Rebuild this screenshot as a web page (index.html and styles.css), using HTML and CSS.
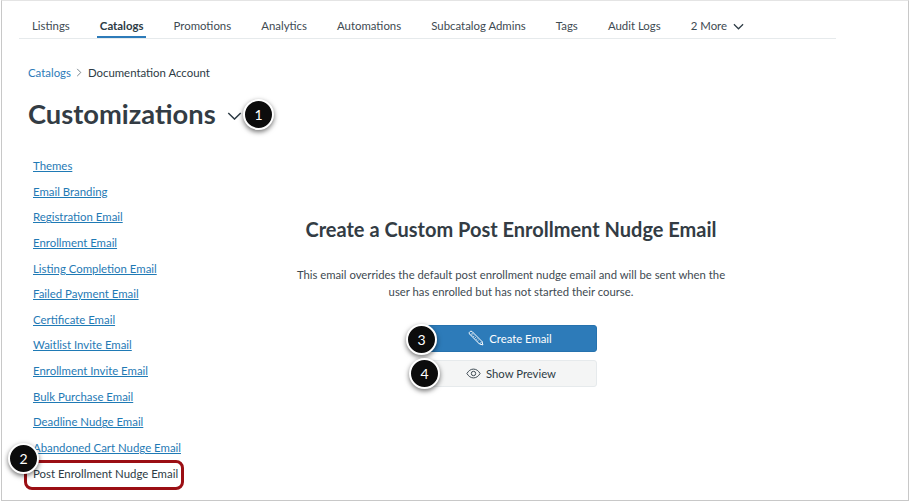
FILE: index.html
```html
<!DOCTYPE html>
<html lang="en">
<head>
    <meta charset="UTF-8">
    <meta name="viewport" content="width=device-width, initial-scale=1.0">
    <title>Customizations</title>
    <link rel="stylesheet" href="styles.css">
</head>
<body>
    <div class="window">
        <!-- Tabs -->
        <nav class="tabs">
            <a class="tab">Listings</a>
            <a class="tab tab-active">Catalogs</a>
            <a class="tab">Promotions</a>
            <a class="tab">Analytics</a>
            <a class="tab">Automations</a>
            <a class="tab">Subcatalog Admins</a>
            <a class="tab">Tags</a>
            <a class="tab">Audit Logs</a>
            <a class="tab">2 More
                <svg class="tab-chevron" viewBox="0 0 12 7" width="11" height="7"><path d="M1 1l5 5 5-5" fill="none" stroke="#2d3b45" stroke-width="1.3"/></svg>
            </a>
        </nav>

        <!-- Breadcrumb -->
        <div class="breadcrumb">
            <a class="crumb-link">Catalogs</a>
            <svg class="crumb-sep" viewBox="0 0 6 10" width="6" height="9"><path d="M1 1l4 4-4 4" fill="none" stroke="#6b7780" stroke-width="1"/></svg>
            <span>Documentation Account</span>
        </div>

        <div class="title-row">
            <h1>Customizations</h1>
            <svg class="title-chevron" viewBox="0 0 16 9" width="15" height="8"><path d="M1 1l7 7 7-7" fill="none" stroke="#2d3b45" stroke-width="1.6"/></svg>
        </div>

        <div class="content">
            <!-- Side menu -->
            <ul class="side-menu">
                <li><a>Themes</a></li>
                <li><a>Email Branding</a></li>
                <li><a>Registration Email</a></li>
                <li><a>Enrollment Email</a></li>
                <li><a>Listing Completion Email</a></li>
                <li><a>Failed Payment Email</a></li>
                <li><a>Certificate Email</a></li>
                <li><a>Waitlist Invite Email</a></li>
                <li><a>Enrollment Invite Email</a></li>
                <li><a>Bulk Purchase Email</a></li>
                <li><a>Deadline Nudge Email</a></li>
                <li><a>Abandoned Cart Nudge Email</a></li>
                <li class="current">Post Enrollment Nudge Email</li>
            </ul>

            <!-- Main panel -->
            <div class="panel">
                <h2>Create a Custom Post Enrollment Nudge Email</h2>
                <p>This email overrides the default post enrollment nudge email and will be sent when the user has enrolled but has not started their course.</p>
                <button class="btn btn-primary">
                    <svg viewBox="0 0 16 16" width="16" height="16"><path d="M1.2 2.6l1.4-1.4 1.3.2L14 11.5l.9 3.4-3.4-.9L1.4 3.9z" fill="none" stroke="#fff" stroke-width="1"/><path d="M2.8 4.8l2-2M5 4.4l-1.2 1.2M6.4 5.8L5.2 7M7.8 7.2L6.6 8.4M9.2 8.6L8 9.8M10.6 10l-1.2 1.2M11.5 14l2.5-2.5" fill="none" stroke="#fff" stroke-width=".8"/></svg>
                    Create Email
                </button>
                <button class="btn btn-default">
                    <svg viewBox="0 0 16 12" width="15" height="11"><path d="M.8 6C2.6 3 5 1.2 8 1.2S13.4 3 15.2 6c-1.8 3-4.2 4.8-7.2 4.8S2.6 9 .8 6z" fill="none" stroke="#2d3b45" stroke-width="1"/><circle cx="8" cy="6" r="2.4" fill="none" stroke="#2d3b45" stroke-width="1"/></svg>
                    Show Preview
                </button>
            </div>
        </div>

        <!-- Annotations -->
        <div class="highlight"></div>
        <span class="badge badge-1">1</span>
        <span class="badge badge-2">2</span>
        <span class="badge badge-3">3</span>
        <span class="badge badge-4">4</span>
    </div>
</body>
</html>
```
FILE: styles.css
```css
/* Global Styles */
html, body {
    margin: 0;
    padding: 0;
    background-color: #fff;
}

body {
    font-family: Lato, "Open Sans", sans-serif;
    font-size: 11.4px;
    color: #2d3b45;
    height: 504px;
    overflow: hidden;
}

.window {
    position: relative;
    box-sizing: border-box;
    width: 908px;
    height: 501px;
    margin-left: 1px;
    border: 1px solid #c8c8c8;
    border-top-color: #e4e4e4;
}

/* Tabs */
.tabs {
    display: flex;
    gap: 30.1px;
    width: 817px;
    height: 38px;
    margin-left: 17px;
    padding-left: 13px;
    box-sizing: border-box;
    border-bottom: 1px solid #e6eaec;
}

.tab {
    display: block;
    height: 37px;
    line-height: 50px;
    white-space: nowrap;
    color: #3e4a52;
}

.tab-active {
    color: #2d3b45;
    font-weight: 700;
    margin: 0 -3px;
    padding: 0 3px;
    box-sizing: border-box;
    border-bottom: 2px solid #2d7bb9;
}

.tab-chevron {
    margin-left: 3px;
}

/* Breadcrumb */
.breadcrumb {
    display: flex;
    align-items: center;
    gap: 5.5px;
    margin: 25px 0 0 26px;
    height: 16px;
}

.crumb-link {
    color: #2d7bb9;
}

/* Title */
.title-row {
    display: flex;
    align-items: center;
    gap: 11px;
    margin: 15px 0 0 26px;
    height: 36px;
}

h1 {
    margin: 0;
    font-size: 27.3px;
    font-weight: 700;
    color: #333c44;
}

.title-chevron {
    margin-top: 6px;
}

.content {
    display: flex;
    margin-top: 27px;
}

/* Side menu */
.side-menu {
    list-style: none;
    margin: 0 0 0 31px;
    padding: 0;
    width: 180px;
}

.side-menu li {
    height: 25.65px;
    line-height: 16px;
    white-space: nowrap;
}

.side-menu a {
    color: #1f7ab5;
    text-decoration: underline;
}

/* Main panel */
.panel {
    display: flex;
    flex-direction: column;
    align-items: center;
    width: 446px;
    margin-left: 75px;
    text-align: center;
}

h2 {
    margin: 58px 0 0;
    font-size: 20px;
    font-weight: 700;
    line-height: 26px;
    color: #333c44;
    white-space: nowrap;
}

.panel p {
    margin: 25px 0 0;
    width: 440px;
    font-size: 11.3px;
    line-height: 16.6px;
    color: #3e4a52;
}

.btn {
    display: flex;
    align-items: center;
    justify-content: center;
    gap: 5px;
    width: 170px;
    font-family: inherit;
    font-size: 11.3px;
    border-radius: 3px;
    cursor: pointer;
}

.btn-primary {
    height: 27px;
    margin: 24.8px 0 0 2px;
    padding: 0 4px 0 0;
    border: 1px solid #2672ae;
    background-color: #2d7bb9;
    color: #fff;
}

.btn-default {
    height: 27px;
    margin: 8px 0 0 2px;
    padding: 0 2px 0 0;
    border: 1px solid #e6eaec;
    background-color: #f4f5f5;
    color: #2d3b45;
}

/* Annotations */
.highlight {
    position: absolute;
    left: 22px;
    top: 459px;
    width: 160px;
    height: 30px;
    box-sizing: border-box;
    border: 3px solid #9b0f14;
    border-radius: 8px;
}

.badge {
    position: absolute;
    box-sizing: border-box;
    width: 31px;
    height: 31px;
    line-height: 27px;
    text-align: center;
    font-size: 14px;
    color: #fff;
    background-color: #0c0c0c;
    border: 2px solid #fff;
    border-radius: 50%;
    box-shadow: 0 2px 5px rgba(0, 0, 0, 0.55);
}

.badge-1 { left: 241px; top: 98px; }
.badge-2 { left: 6px; top: 442px; }
.badge-3 { left: 404px; top: 323px; }
.badge-4 { left: 407px; top: 357px; }
```
